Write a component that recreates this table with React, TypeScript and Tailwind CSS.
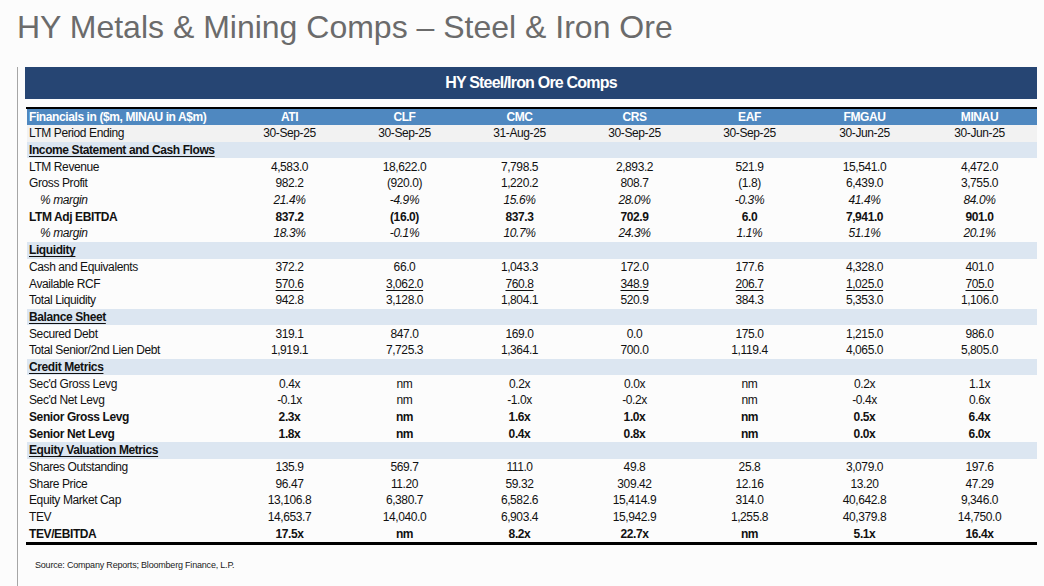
const cols = ["ATI", "CLF", "CMC", "CRS", "EAF", "FMGAU", "MINAU"];

type Row = {
  label: string;
  values?: string[];
  kind?: "section" | "period" | "margin" | "bold" | "under";
};

const rows: Row[] = [
  {
    label: "LTM Period Ending",
    kind: "period",
    values: ["30-Sep-25", "30-Sep-25", "31-Aug-25", "30-Sep-25", "30-Sep-25", "30-Jun-25", "30-Jun-25"],
  },
  { label: "Income Statement and Cash Flows", kind: "section" },
  {
    label: "LTM Revenue",
    values: ["4,583.0", "18,622.0", "7,798.5", "2,893.2", "521.9", "15,541.0", "4,472.0"],
  },
  {
    label: "Gross Profit",
    values: ["982.2", "(920.0)", "1,220.2", "808.7", "(1.8)", "6,439.0", "3,755.0"],
  },
  {
    label: "% margin",
    kind: "margin",
    values: ["21.4%", "-4.9%", "15.6%", "28.0%", "-0.3%", "41.4%", "84.0%"],
  },
  {
    label: "LTM Adj EBITDA",
    kind: "bold",
    values: ["837.2", "(16.0)", "837.3", "702.9", "6.0", "7,941.0", "901.0"],
  },
  {
    label: "% margin",
    kind: "margin",
    values: ["18.3%", "-0.1%", "10.7%", "24.3%", "1.1%", "51.1%", "20.1%"],
  },
  { label: "Liquidity", kind: "section" },
  {
    label: "Cash and Equivalents",
    values: ["372.2", "66.0", "1,043.3", "172.0", "177.6", "4,328.0", "401.0"],
  },
  {
    label: "Available RCF",
    kind: "under",
    values: ["570.6", "3,062.0", "760.8", "348.9", "206.7", "1,025.0", "705.0"],
  },
  {
    label: "Total Liquidity",
    values: ["942.8", "3,128.0", "1,804.1", "520.9", "384.3", "5,353.0", "1,106.0"],
  },
  { label: "Balance Sheet", kind: "section" },
  {
    label: "Secured Debt",
    values: ["319.1", "847.0", "169.0", "0.0", "175.0", "1,215.0", "986.0"],
  },
  {
    label: "Total Senior/2nd Lien Debt",
    values: ["1,919.1", "7,725.3", "1,364.1", "700.0", "1,119.4", "4,065.0", "5,805.0"],
  },
  { label: "Credit Metrics", kind: "section" },
  {
    label: "Sec'd Gross Levg",
    values: ["0.4x", "nm", "0.2x", "0.0x", "nm", "0.2x", "1.1x"],
  },
  {
    label: "Sec'd Net Levg",
    values: ["-0.1x", "nm", "-1.0x", "-0.2x", "nm", "-0.4x", "0.6x"],
  },
  {
    label: "Senior Gross Levg",
    kind: "bold",
    values: ["2.3x", "nm", "1.6x", "1.0x", "nm", "0.5x", "6.4x"],
  },
  {
    label: "Senior Net Levg",
    kind: "bold",
    values: ["1.8x", "nm", "0.4x", "0.8x", "nm", "0.0x", "6.0x"],
  },
  { label: "Equity Valuation Metrics", kind: "section" },
  {
    label: "Shares Outstanding",
    values: ["135.9", "569.7", "111.0", "49.8", "25.8", "3,079.0", "197.6"],
  },
  {
    label: "Share Price",
    values: ["96.47", "11.20", "59.32", "309.42", "12.16", "13.20", "47.29"],
  },
  {
    label: "Equity Market Cap",
    values: ["13,106.8", "6,380.7", "6,582.6", "15,414.9", "314.0", "40,642.8", "9,346.0"],
  },
  {
    label: "TEV",
    values: ["14,653.7", "14,040.0", "6,903.4", "15,942.9", "1,255.8", "40,379.8", "14,750.0"],
  },
  {
    label: "TEV/EBITDA",
    kind: "bold",
    values: ["17.5x", "nm", "8.2x", "22.7x", "nm", "5.1x", "16.4x"],
  },
];

function TableRow({ row }: { row: Row }) {
  const bg =
    row.kind === "section"
      ? "bg-[#dce6f1]"
      : row.kind === "period"
      ? "bg-[#f2f2f2]"
      : "";
  const weight = row.kind === "bold" || row.kind === "section" ? "font-bold" : "";
  const italic = row.kind === "margin" ? "italic" : "";

  return (
    <div className={`grid grid-cols-[205px_repeat(7,115px)] h-[16.7px] items-center leading-none ${bg} ${weight} ${italic}`}>
      <div className={row.kind === "margin" ? "pl-[13px]" : "pl-[2px]"}>
        {row.kind === "section" ? (
          <span className="underline underline-offset-[2px]">{row.label}</span>
        ) : (
          row.label
        )}
      </div>
      {(row.values ?? []).map((v, i) => (
        <div key={i} className="text-center">
          {row.kind === "under" ? (
            <span className="underline underline-offset-[2px]">{v}</span>
          ) : (
            v
          )}
        </div>
      ))}
    </div>
  );
}

export default function App() {
  return (
    <div className="w-[1044px] h-[586px] bg-[#fcfcfc] flex flex-col overflow-hidden font-['Liberation_Sans',Arial,sans-serif]">
      <h1 className="h-[67px] pl-[17px] pt-[9px] text-[32px] leading-[36px] text-[#6b6b6b]">
        HY Metals &amp; Mining Comps – Steel &amp; Iron Ore
      </h1>

      <div className="flex-1 ml-[17px] border-l border-[#a6a6a6] pl-[7px]">
        <div className="w-[1012px] h-[32px] bg-[#264573] flex items-center justify-center text-white font-bold text-[16px] tracking-[-0.8px]">
          HY Steel/Iron Ore Comps
        </div>

        <div className="ml-[1px] mt-[8px] w-[1011px] border-t-2 border-b-[3px] border-black text-[12px] tracking-[-0.4px] text-[#111]">
          <div className="grid grid-cols-[205px_repeat(7,115px)] ml-[1px] h-[16px] items-center leading-none bg-[#4f88c0] text-white font-bold">
            <div className="pl-[2px]">Financials in ($m, MINAU in A$m)</div>
            {cols.map((c) => (
              <div key={c} className="text-center">
                {c}
              </div>
            ))}
          </div>
          <div className="ml-[1px]">
            {rows.map((r, i) => (
              <TableRow key={i} row={r} />
            ))}
          </div>
        </div>

        <p className="mt-[14px] pl-[10px] text-[9px] tracking-[-0.2px] text-[#222]">
          Source: Company Reports; Bloomberg Finance, L.P.
        </p>
      </div>
    </div>
  );
}
